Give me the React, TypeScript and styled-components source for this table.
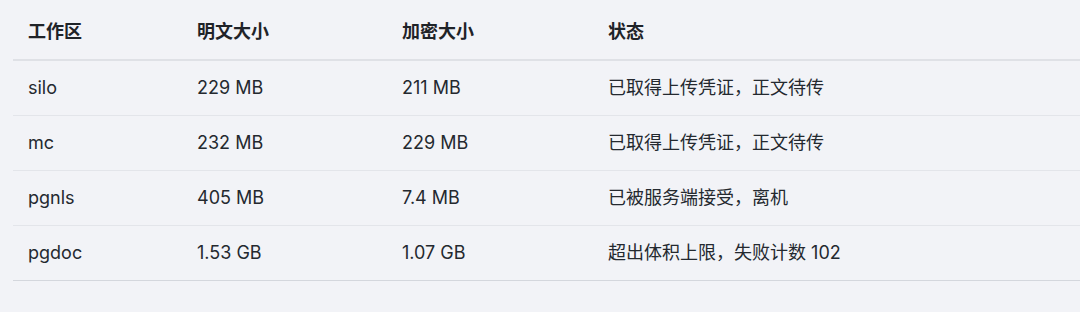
import React from "react";
import styled, { createGlobalStyle } from "styled-components";

const Global = createGlobalStyle`
  html, body {
    margin: 0;
    padding: 0;
    background: #f2f3f7;
  }
  body {
    font-family: Inter, "Noto Sans CJK SC", sans-serif;
    color: #1f2328;
  }
`;

const Page = styled.div`
  width: 1080px;
  height: 312px;
  background: #f2f3f7;
  padding: 5px 0 0 13px;
  box-sizing: border-box;
`;

const Table = styled.table`
  width: 100%;
  border-collapse: collapse;
  font-size: 18px;
  line-height: 24px;
`;

const HeadCell = styled.th<{ $w?: number }>`
  text-align: left;
  font-weight: 700;
  height: 55px;
  padding: 0 15px;
  vertical-align: middle;
  border-bottom: 2px solid #dfe1e6;
  width: ${(p) => (p.$w ? `${p.$w}px` : "auto")};
  box-sizing: border-box;
`;

const Row = styled.tr<{ $last?: boolean }>`
  border-bottom: 1px solid ${(p) => (p.$last ? "#d4d7dd" : "#e3e5ea")};
`;

const Cell = styled.td`
  height: 54px;
  padding: 0 15px;
  vertical-align: middle;
  font-weight: 400;
  color: #24292f;
`;

const rows = [
  ["silo", "229 MB", "211 MB", "已取得上传凭证，正文待传"],
  ["mc", "232 MB", "229 MB", "已取得上传凭证，正文待传"],
  ["pgnls", "405 MB", "7.4 MB", "已被服务端接受，离机"],
  ["pgdoc", "1.53 GB", "1.07 GB", "超出体积上限，失败计数 102"],
];

export default function App() {
  return (
    <Page>
      <Global />
      <Table>
        <thead>
          <tr>
            <HeadCell $w={169}>工作区</HeadCell>
            <HeadCell $w={205}>明文大小</HeadCell>
            <HeadCell $w={206}>加密大小</HeadCell>
            <HeadCell>状态</HeadCell>
          </tr>
        </thead>
        <tbody>
          {rows.map((r, i) => (
            <Row key={r[0]} $last={i === rows.length - 1}>
              {r.map((c, j) => (
                <Cell key={j}>{c}</Cell>
              ))}
            </Row>
          ))}
        </tbody>
      </Table>
    </Page>
  );
}
